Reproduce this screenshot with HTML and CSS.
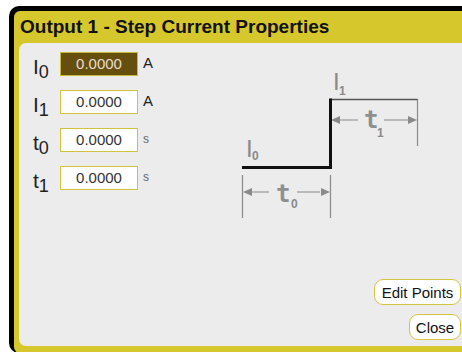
FILE: index.html
```html
<!DOCTYPE html>
<html lang="en">
<head>
    <meta charset="UTF-8">
    <title>Output 1 - Step Current Properties</title>
    <link rel="stylesheet" href="styles.css">
</head>
<body>
    <div class="frame">
        <div class="window">
            <div class="title">Output 1 - Step Current Properties</div>
            <div class="panel">
                <div class="top">
                    <div class="fields">
                        <div class="row">
                            <span class="sym">I<sub>0</sub></span>
                            <span class="value active">0.0000</span>
                            <span class="unit">A</span>
                        </div>
                        <div class="row">
                            <span class="sym">I<sub>1</sub></span>
                            <span class="value">0.0000</span>
                            <span class="unit">A</span>
                        </div>
                        <div class="row">
                            <span class="sym">t<sub>0</sub></span>
                            <span class="value">0.0000</span>
                            <span class="unit small">s</span>
                        </div>
                        <div class="row">
                            <span class="sym">t<sub>1</sub></span>
                            <span class="value">0.0000</span>
                            <span class="unit small">s</span>
                        </div>
                    </div>

                    <!-- step waveform -->
                    <svg class="diagram" width="200" height="180" viewBox="0 0 200 180">
                        <g stroke="#8a8a8a" stroke-width="1.2" fill="none">
                            <path d="M186.5 39V86"/>
                            <path d="M11.5 115V158M99.5 115V158"/>
                            <path d="M108 60H127M153 60H177"/>
                            <path d="M21 132H38M66 132H89"/>
                        </g>
                        <g fill="#8a8a8a">
                            <path d="M100 60l9-4v8z"/>
                            <path d="M186 60l-9-4v8z"/>
                            <path d="M12 132l9-4v8z"/>
                            <path d="M99 132l-9-4v8z"/>
                        </g>
                        <path d="M99 39.5H186.5" stroke="#555" stroke-width="1.5" fill="none"/>
                        <path d="M11 107.5H99.5V38.5" stroke="#111" stroke-width="3" fill="none"/>
                        <text class="d-big" x="102" y="30">I</text>
                        <text class="d-sub" x="108" y="35">1</text>
                        <text class="d-big" x="15" y="97">I</text>
                        <text class="d-sub" x="21" y="100">0</text>
                        <text class="d-t" x="133" y="68">t</text>
                        <text class="d-sub" x="146" y="77">1</text>
                        <text class="d-t" x="45" y="142">t</text>
                        <text class="d-sub" x="60" y="148">0</text>
                    </svg>
                </div>

                <div class="actions">
                    <button class="btn edit">Edit Points</button>
                    <button class="btn close">Close</button>
                </div>
            </div>
        </div>
    </div>
</body>
</html>
```

FILE: styles.css
```css
html, body {
    margin: 0;
    background: #fff;
}

body {
    width: 462px;
    height: 352px;
    overflow: hidden;
    font-family: "Liberation Sans", Arial, sans-serif;
}

/* black edge on top and left only, the rest runs off the screen */
.frame {
    margin: 6px 0 0 9px;
    width: 470px;
    padding: 5px 0 0 5px;
    background: #000;
    border-radius: 10px 0 0 10px;
}

.window {
    height: 335px;
    padding: 0 0 7px 5px;
    background: #d6c82c;
    border-radius: 6px 0 0 6px;
    display: flex;
    flex-direction: column;
}

.title {
    height: 32px;
    line-height: 32px;
    padding-left: 1px;
    font-size: 19px;
    font-weight: bold;
    color: #111;
    white-space: nowrap;
}

.panel {
    flex: 1;
    background: #ececec;
    border-radius: 7px 0 0 7px;
    display: flex;
    flex-direction: column;
}

.top {
    display: flex;
}

.fields {
    width: 198px;
    padding: 9px 0 0 14px;
}

.row {
    display: flex;
    align-items: flex-start;
    height: 24px;
    margin-bottom: 14px;
}

.sym {
    width: 27px;
    height: 24px;
    line-height: 24px;
    padding-top: 3px;
    box-sizing: border-box;
    font-size: 21px;
    color: #222;
}

.sym sub {
    font-size: 18px;
    vertical-align: -4px;
}

.value {
    width: 78px;
    height: 24px;
    box-sizing: border-box;
    border: 1px solid #d2c43a;
    background: #fff;
    text-align: center;
    line-height: 22px;
    font-size: 15px;
    color: #333;
}

.value.active {
    background: #664e0f;
    border-color: #c9b936;
    color: #e6ded0;
}

.unit {
    margin-left: 5px;
    line-height: 22px;
    font-size: 15px;
    color: #222;
}

.unit.small {
    font-size: 12px;
    color: #666;
}

.diagram {
    margin-top: 17px;
}

.d-big {
    font: 24px "Liberation Sans", sans-serif;
    fill: #8a8a8a;
}

.d-sub {
    font: bold 12px "Liberation Sans", sans-serif;
    fill: #8a8a8a;
}

.d-t {
    font: bold 24px "DejaVu Sans Mono", monospace;
    fill: #8f8f8f;
}

.actions {
    margin-top: auto;
    width: 442px;
    padding-bottom: 6px;
    display: flex;
    flex-direction: column;
    align-items: flex-end;
    gap: 9px;
}

.btn {
    height: 26px;
    padding: 0;
    border: 1.5px solid #d4c640;
    border-radius: 9px;
    background: #fff;
    font-family: "Liberation Sans", Arial, sans-serif;
    font-size: 15px;
    color: #111;
}

.btn.edit {
    width: 87px;
}

.btn.close {
    width: 52px;
}
```
